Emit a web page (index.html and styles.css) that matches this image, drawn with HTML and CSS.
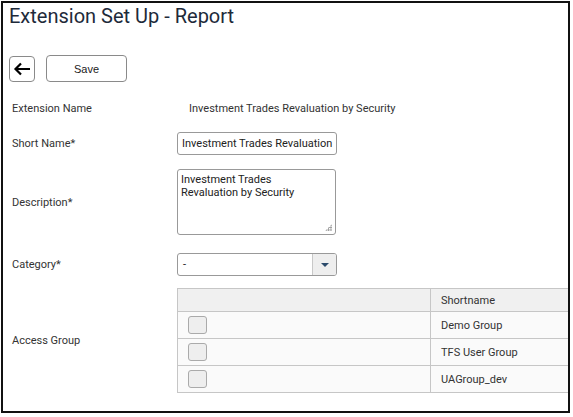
FILE: index.html
```html
<!DOCTYPE html>
<html>
<head>
<meta charset="utf-8">
<link rel="stylesheet" href="styles.css">
</head>
<body>
<div class="frame">
  <h1 class="title">Extension Set Up - Report</h1>
  <div class="toolbar">
    <button class="btn-back" aria-label="Back">
      <svg width="18" height="14" viewBox="0 0 18 14"><path d="M17 7H3M8 1.5L2.5 7L8 12.5" fill="none" stroke="#000" stroke-width="2.2"/></svg>
    </button>
    <button class="btn-save">Save</button>
  </div>
  <div class="form">
    <div class="row row-name">
      <div class="label">Extension Name</div>
      <div class="static">Investment Trades Revaluation by Security</div>
    </div>
    <div class="row row-short">
      <div class="label">Short Name*</div>
      <div class="input">Investment Trades Revaluation</div>
    </div>
    <div class="row row-desc">
      <div class="label">Description*</div>
      <div class="textarea">Investment Trades<br>Revaluation by Security<span class="grip"></span></div>
    </div>
    <div class="row row-cat">
      <div class="label">Category*</div>
      <div class="select"><span class="sel-val">-</span><span class="sel-btn"><span class="tri"></span></span></div>
    </div>
    <div class="row row-access">
      <div class="label">Access Group</div>
      <table class="grid">
        <thead><tr><th class="c1"></th><th class="c2">Shortname</th></tr></thead>
        <tbody>
          <tr><td class="c1"><span class="cb"></span></td><td class="c2">Demo Group</td></tr>
          <tr><td class="c1"><span class="cb"></span></td><td class="c2">TFS User Group</td></tr>
          <tr><td class="c1"><span class="cb"></span></td><td class="c2">UAGroup_dev</td></tr>
        </tbody>
      </table>
    </div>
  </div>
</div>
</body>
</html>
```
FILE: styles.css
```css
* { box-sizing: border-box; }
html, body { margin: 0; padding: 0; background: #fff; }
body { font-family: Roboto, "Liberation Sans", Arial, sans-serif; font-size: 11px; color: #333; }
.frame {
  margin: 1px 0 0 1px;
  width: 569px;
  height: 412px;
  border: 2px solid #111;
  overflow: hidden;
  padding: 1px 0 0 6px;
}
.title {
  margin: 0;
  font-family: Roboto, "Liberation Sans", Arial, sans-serif;
  font-weight: normal;
  font-size: 20px;
  line-height: 24px;
  color: #1e2a3a;
}
.toolbar { display: flex; gap: 11px; margin-top: 27px; height: 27px; }
.btn-back {
  width: 26px; height: 26px; margin-top: 1px; padding: 0;
  border: 1px solid #8a8a8a; border-radius: 4px; background: #fff;
  display: flex; align-items: center; justify-content: center;
}
.btn-save {
  width: 81px; height: 27px; padding: 0;
  border: 1px solid #8a8a8a; border-radius: 4px; background: #fff;
  font-family: "Liberation Sans", Arial, sans-serif; font-size: 11px; color: #222;
}
.form { margin-top: 14px; display: flex; flex-direction: column; }
.row { display: flex; align-items: center; }
.label { width: 168px; flex-shrink: 0; padding-left: 3px; color: #333; }
.row-name { height: 24px; }
.static { padding-left: 12px; color: #333; }
.row-short { margin-top: 12px; }
.input {
  width: 160px; height: 23px; border: 1px solid #999; border-radius: 3px;
  padding: 0 4px; line-height: 21px; font-size: 11px; color: #222; white-space: nowrap; overflow: hidden;
}
.row-desc { margin-top: 14px; }
.textarea {
  position: relative;
  width: 159px; height: 66px; border: 1px solid #999; border-radius: 3px;
  padding: 3px 3px; line-height: 13px; color: #222;
}
.grip {
  position: absolute; right: 3px; bottom: 3px; width: 7px; height: 7px;
  background-image: radial-gradient(circle, #999 0.8px, transparent 1px);
  background-size: 2.4px 2.4px;
  clip-path: polygon(100% 0, 100% 100%, 0 100%);
}
.row-cat { margin-top: 18px; }
.select {
  width: 160px; height: 23px; border: 1px solid #999; border-radius: 3px;
  display: flex; overflow: hidden;
}
.sel-val { flex: 1; padding-left: 5px; line-height: 21px; color: #222; }
.sel-btn {
  width: 24px; background: #eee; border-left: 1px solid #c8c8c8;
  display: flex; align-items: center; justify-content: center;
}
.tri { width: 0; height: 0; border-left: 4px solid transparent; border-right: 4px solid transparent; border-top: 4px solid #2b4a6b; }
.row-access { margin-top: 12px; }
.grid {
  flex-shrink: 0;
  border-collapse: collapse; width: 440px; table-layout: fixed;
  font-size: 11px; color: #333;
}
.grid th, .grid td { border: 1px solid #c6c6c6; padding: 0 10px; text-align: left; font-weight: normal; }
.grid .c1 { width: 253px; }
.grid th { height: 23px; background: #f0f0f0; }
.grid td { height: 27px; background: #fafafa; }
.cb {
  display: block; width: 19px; height: 18px; margin-left: 0;
  border: 1px solid #aaa; border-radius: 3px; background: #eee;
}
```
